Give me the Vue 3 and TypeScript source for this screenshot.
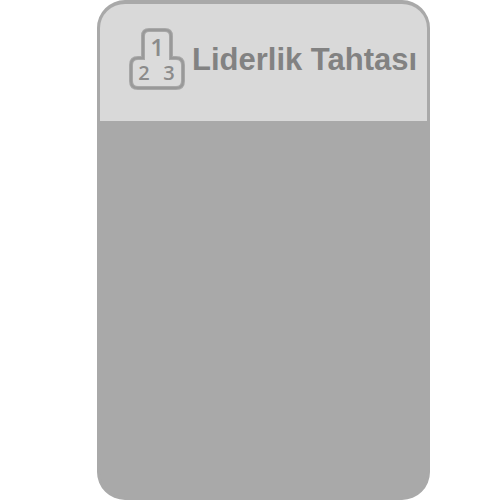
<script setup lang="ts">
interface Place {
  rank: number
  x: number
  y: number
  size: number
}

const title: string = 'Liderlik Tahtası'
const outline: string =
  'M21 3H37Q43 3 43 9V31H48Q55 31 55 38V54Q55 61 48 61H10Q3 61 3 54V38Q3 31 10 31H15V9Q15 3 21 3Z'
const places: Place[] = [
  { rank: 1, x: 29, y: 29, size: 24 },
  { rank: 2, x: 16, y: 53, size: 20 },
  { rank: 3, x: 41, y: 53, size: 20 },
]
</script>

<template>
  <main class="page">
    <section class="board" aria-labelledby="board-title">
      <header class="board-header">
        <svg class="podium" viewBox="0 0 58 66" width="58" height="66" aria-hidden="true">
          <path class="outline" :d="outline" />
          <path class="outline-core" :d="outline" />
          <text
            v-for="place in places"
            :key="place.rank"
            class="rank"
            :x="place.x"
            :y="place.y"
            :font-size="place.size"
            text-anchor="middle"
          >{{ place.rank }}</text>
        </svg>
        <h1 id="board-title" class="title">{{ title }}</h1>
      </header>
      <div class="board-body"></div>
    </section>
  </main>
</template>

<style>
body {
  background: #ffffff;
}
</style>

<style scoped>
.page {
  display: flex;
  box-sizing: border-box;
  min-height: 100vh;
  padding: 0 70px 0 97px;
}

.board {
  display: flex;
  flex: 1;
  flex-direction: column;
  overflow: hidden;
  border: 3px solid #a9a9a9;
  border-top-width: 4px;
  border-radius: 28px;
  background: #a9a9a9;
}

.board-header {
  display: flex;
  align-items: center;
  gap: 6px;
  box-sizing: border-box;
  min-height: 117px;
  padding: 0 12px 5px 28px;
  background: #d9d9d9;
}

.podium {
  flex: none;
}

.outline {
  fill: #dbdbdb;
  stroke: #a8a8a8;
  stroke-width: 4;
}

.outline-core {
  fill: none;
  stroke: #999999;
  stroke-width: 2;
}

.rank {
  fill: #8b8b8b;
  font-family: "Open Sans", "Noto Sans", sans-serif;
  font-weight: 600;
}

.title {
  margin: 0;
  color: #828282;
  font-family: "Liberation Sans", Arial, sans-serif;
  font-size: 31px;
  font-weight: 700;
  line-height: 36px;
  white-space: nowrap;
}

.board-body {
  flex: 1;
}
</style>
